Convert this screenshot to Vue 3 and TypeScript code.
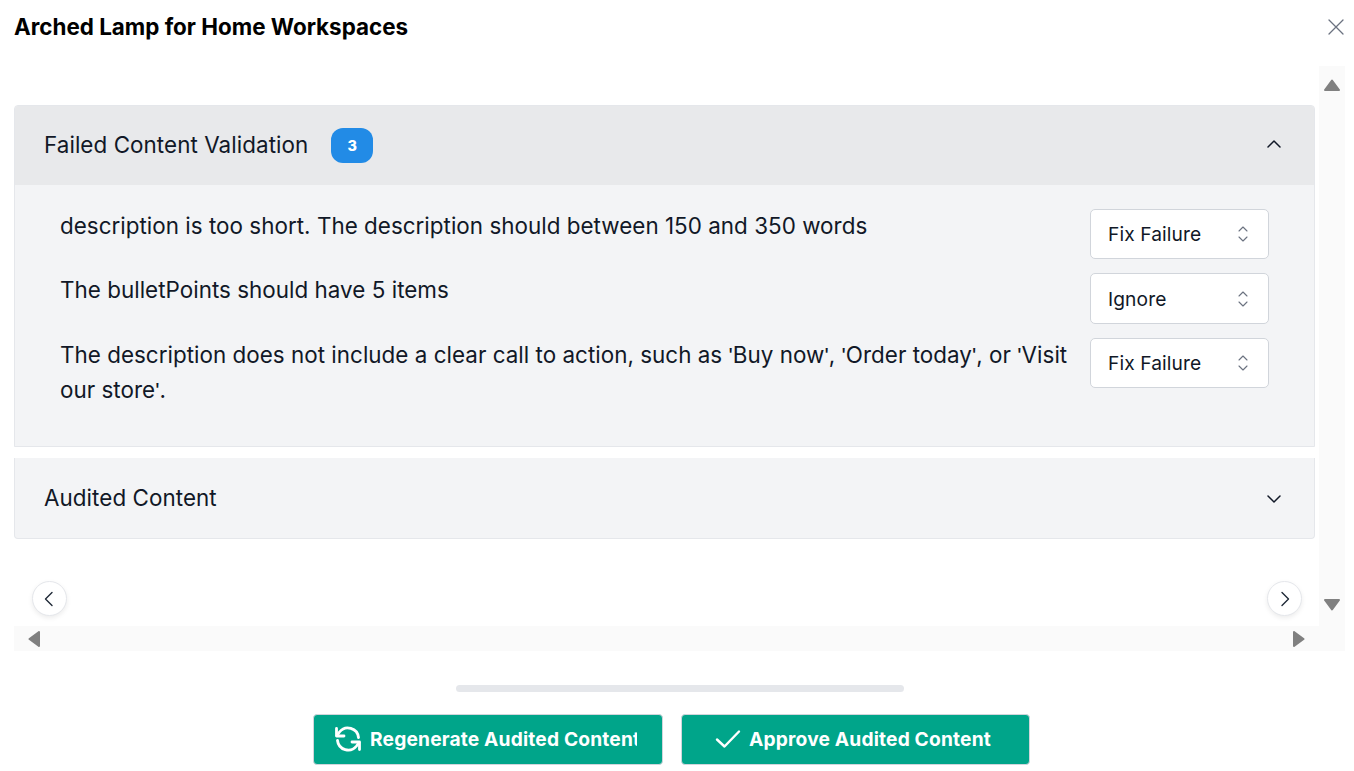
<script setup lang="ts">
interface Failure {
  parts: string[]
  action: string
}
const raw = [
  { text: 'description is too short. The description should between 150 and 350 words', action: 'Fix Failure' },
  { text: 'The bulletPoints should have 5 items', action: 'Ignore' },
  { text: "The description does not include a clear call to action, such as 'Buy now', 'Order today', or 'Visit our store'.", action: 'Fix Failure' },
]
const failures: Failure[] = raw.map((r) => ({ parts: r.text.split(/(')/), action: r.action }))
</script>

<template>
  <div class="modal">
    <header class="top">
      <h1 class="title">Arched Lamp for Home Workspaces</h1>
      <button class="close" aria-label="Close">
        <svg width="16" height="16" viewBox="0 0 16 16" fill="none" stroke="#6b7280" stroke-width="1.3" stroke-linecap="round"><path d="M1 1l14 14M15 1L1 15" /></svg>
      </button>
    </header>

    <div class="frame">
      <div class="viewport">
        <section class="acc first">
          <div class="acc-head open">
            <span class="acc-title">Failed Content Validation</span>
            <span class="badge">3</span>
            <svg class="chev" width="16" height="16" viewBox="0 0 16 16" fill="none" stroke="#111827" stroke-width="1.5" stroke-linecap="round" stroke-linejoin="round"><path d="M2 11l6-6 6 6" /></svg>
          </div>
          <div class="acc-body">
            <div v-for="(f, i) in failures" :key="i" class="row">
              <p class="msg"><template v-for="(p, j) in f.parts" :key="j"><span v-if="p === `'`" class="q">{{ p }}</span><template v-else>{{ p }}</template></template></p>
              <div class="select">
                <span>{{ f.action }}</span>
                <svg width="12" height="18" viewBox="0 0 12 18" fill="none" stroke="#6b7280" stroke-width="1.1" stroke-linecap="round" stroke-linejoin="round"><path d="M2 6l4-4 4 4M2 12l4 4 4-4" /></svg>
              </div>
            </div>
          </div>
        </section>
        <section class="acc second">
          <div class="acc-head">
            <span class="acc-title">Audited Content</span>
            <svg class="chev" width="16" height="16" viewBox="0 0 16 16" fill="none" stroke="#111827" stroke-width="1.5" stroke-linecap="round" stroke-linejoin="round"><path d="M2 5l6 6 6-6" /></svg>
          </div>
        </section>
        <button class="nav prev" aria-label="Previous">
          <svg width="14" height="16" viewBox="0 0 14 16" fill="none" stroke="#1f2937" stroke-width="1.4" stroke-linecap="round" stroke-linejoin="round"><path d="M10 1.500L3.500 8l6.500 6.500" /></svg>
        </button>
        <button class="nav next" aria-label="Next">
          <svg width="14" height="16" viewBox="0 0 14 16" fill="none" stroke="#1f2937" stroke-width="1.4" stroke-linecap="round" stroke-linejoin="round"><path d="M4 1.500L10.500 8 4 14.500" /></svg>
        </button>
      </div>

      <div class="vbar">
        <svg width="16" height="12" viewBox="0 0 16 12" fill="#808080" stroke="#808080" stroke-width="2" stroke-linejoin="round"><path d="M8 1.500L15 11H1z" /></svg>
        <svg width="16" height="12" viewBox="0 0 16 12" fill="#808080" stroke="#808080" stroke-width="2" stroke-linejoin="round"><path d="M8 10.500L1 1h14z" /></svg>
      </div>
      <div class="hbar">
        <svg width="12" height="16" viewBox="0 0 12 16" fill="#808080" stroke="#808080" stroke-width="2" stroke-linejoin="round"><path d="M1.500 8L11 1v14z" /></svg>
        <svg width="12" height="16" viewBox="0 0 12 16" fill="#808080" stroke="#808080" stroke-width="2" stroke-linejoin="round"><path d="M10.500 8L1 1v14z" /></svg>
      </div>
      <div class="corner"></div>
    </div>

    <div class="track"></div>

    <footer class="actions">
      <button class="btn regen">
        <svg width="28" height="28" viewBox="0 0 28 28" fill="none" stroke="#fff" stroke-width="2.800" stroke-linecap="round" stroke-linejoin="round">
          <path d="M24.500 12.500A10.700 10.700 0 0 0 5.500 7L3 10.500" />
          <path d="M2.500 3.500V11H10" />
          <path d="M3.500 15.500A10.700 10.700 0 0 0 22.500 21l2.500-3.500" />
          <path d="M25.500 24.500V17H18" />
        </svg>
        <span class="clip">Regenerate Audited Content</span>
      </button>
      <button class="btn approve">
        <svg width="26" height="20" viewBox="0 0 26 20" fill="none" stroke="#fff" stroke-width="2.400" stroke-linecap="round" stroke-linejoin="round"><path d="M2 10.500l7.500 7L24 2.500" /></svg>
        <span>Approve Audited Content</span>
      </button>
    </footer>
  </div>
</template>

<style>
html, body { margin: 0; background: #fff; }
</style>

<style scoped>
.modal {
  width: 1354px;
  height: 771px;
  box-sizing: border-box;
  padding: 0 9px 6px 14px;
  display: flex;
  flex-direction: column;
  overflow: hidden;
  font-family: Inter, "Liberation Sans", sans-serif;
  color: #111827;
}
.top {
  height: 66px;
  flex: none;
  display: flex;
  justify-content: space-between;
  align-items: flex-start;
}
.title {
  margin: 14px 0 0;
  font-size: 22.4px;
  line-height: 26px;
  font-weight: 700;
  color: #000;
}
.close {
  margin: 18px 0 0;
  padding: 0;
  border: 0;
  background: none;
  width: 18px;
  height: 18px;
  display: flex;
  align-items: center;
  justify-content: center;
}
.frame {
  flex: none;
  height: 585px;
  display: grid;
  grid-template-columns: 1fr 26px;
  grid-template-rows: 1fr 25px;
}
.viewport {
  position: relative;
  padding: 39px 4px 0 0;
}
.acc {
  border: 1px solid #e5e7eb;
  background: #f3f4f6;
}
.first {
  border-radius: 4px 4px 0 0;
}
.second {
  margin-top: 11px;
  border-top: 0;
  border-radius: 0 0 4px 4px;
}
.acc-head {
  height: 80px;
  box-sizing: border-box;
  padding: 0 32px 0 29px;
  display: flex;
  align-items: center;
}
.first .acc-head { height: 79px; }
.first .acc-title { margin-bottom: 2px; }
.first .chev { margin-bottom: 4px; }
.second .chev { margin-top: 2px; }
.acc-head.open {
  background: #e8e9eb;
  border-radius: 3px 3px 0 0;
}
.acc-title {
  font-size: 22.4px;
  line-height: 30px;
  letter-spacing: 0.07px;
  color: #111827;
}
.badge {
  margin-left: 23px;
  width: 42px;
  height: 35px;
  border-radius: 12px;
  background: #228be6;
  color: #fff;
  font-size: 14.400px;
  font-weight: 800;
  display: flex;
  align-items: center;
  justify-content: center;
}
.chev { margin-left: auto; }
.acc-body {
  height: 261px;
  box-sizing: border-box;
  padding: 24px 45px 0 45px;
  display: flex;
  flex-direction: column;
  gap: 14px;
}
.row {
  display: flex;
  align-items: flex-start;
  gap: 20px;
}
.msg {
  flex: 1;
  margin: 0;
  font-size: 22.4px;
  line-height: 34px;
  letter-spacing: 0.03px;
  color: #111827;
}
.q {
  font-family: "Liberation Sans", sans-serif;
}
.select {
  flex: none;
  width: 179px;
  height: 50.400px;
  box-sizing: border-box;
  padding: 0 19px 0 17px;
  background: #fff;
  border: 1px solid #d1d5db;
  border-radius: 5px;
  display: flex;
  align-items: center;
  justify-content: space-between;
  font-size: 19.200px;
  letter-spacing: 0.1px;
  color: #111827;
}
.nav {
  position: absolute;
  top: 515px;
  width: 35px;
  height: 35px;
  padding: 0;
  border: 1px solid #e5e7eb;
  border-radius: 50%;
  background: #fff;
  box-shadow: 0 2px 5px rgba(0, 0, 0, 0.08);
  display: flex;
  align-items: center;
  justify-content: center;
}
.prev { left: 17.500px; }
.next { right: 17px; }
.vbar {
  background: #fafafa;
  display: flex;
  flex-direction: column;
  justify-content: space-between;
  align-items: center;
  padding: 13px 0 15px;
  grid-row: 1 / 2;
  grid-column: 2;
}
.hbar {
  background: #fafafa;
  display: flex;
  justify-content: space-between;
  align-items: center;
  padding: 0 14px;
  grid-row: 2;
  grid-column: 1;
}
.corner { background: #fafafa; }
.track {
  flex: none;
  align-self: center;
  width: 448px;
  height: 7px;
  margin-top: 34px;
  border-radius: 4px;
  background: #e5e7eb;
}
.actions {
  flex: none;
  margin-top: 21.500px;
  padding-right: 16px;
  display: flex;
  justify-content: center;
  gap: 18px;
}
.btn {
  flex: none;
  height: 51px;
  box-sizing: border-box;
  border: 1px solid #d1d5db;
  border-radius: 4px;
  background: #00a58a;
  color: #fff;
  font-family: inherit;
  font-size: 19.200px;
  font-weight: 700;
  letter-spacing: 0.17px;
  display: flex;
  align-items: center;
  padding: 0;
}
.regen { width: 350px; padding-left: 20px; gap: 8px; }
.approve { width: 349px; padding-left: 33px; gap: 8px; }
.clip {
  display: block;
  width: 267px;
  overflow: hidden;
  white-space: nowrap;
  text-align: left;
}
</style>
